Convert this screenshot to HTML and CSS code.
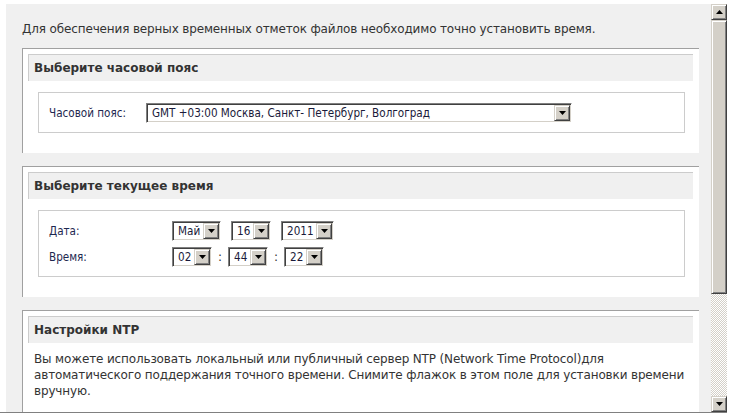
FILE: index.html
```html
<!DOCTYPE html>
<html lang="ru">
<head>
<meta charset="utf-8">
<title>Время</title>
<link rel="stylesheet" href="styles.css">
</head>
<body>
<div class="window">
  <div class="viewport">
    <p class="intro">Для обеспечения верных временных отметок файлов необходимо точно установить время.</p>

    <div class="panel">
      <div class="panel-head">Выберите часовой пояс</div>
      <div class="box">
        <div class="row">
          <span class="label label-tz">Часовой пояс:</span>
          <span class="combo combo-tz"><span class="combo-text">GMT +03:00 Москва, Санкт- Петербург, Волгоград</span><span class="combo-btn"><svg width="7" height="4" viewBox="0 0 7 4"><path d="M0 0H7L3.5 4Z" fill="#000"/></svg></span></span>
        </div>
      </div>
    </div>

    <div class="panel">
      <div class="panel-head">Выберите текущее время</div>
      <div class="box box-time">
        <div class="row">
          <span class="label label-dt">Дата:</span>
          <span class="combo combo-month"><span class="combo-text">Май</span><span class="combo-btn"><svg width="7" height="4" viewBox="0 0 7 4"><path d="M0 0H7L3.5 4Z" fill="#000"/></svg></span></span>
          <span class="combo combo-sm gap10"><span class="combo-text">16</span><span class="combo-btn"><svg width="7" height="4" viewBox="0 0 7 4"><path d="M0 0H7L3.5 4Z" fill="#000"/></svg></span></span>
          <span class="combo combo-year gap10"><span class="combo-text">2011</span><span class="combo-btn"><svg width="7" height="4" viewBox="0 0 7 4"><path d="M0 0H7L3.5 4Z" fill="#000"/></svg></span></span>
        </div>
        <div class="row">
          <span class="label label-dt">Время:</span>
          <span class="combo combo-sm"><span class="combo-text">02</span><span class="combo-btn"><svg width="7" height="4" viewBox="0 0 7 4"><path d="M0 0H7L3.5 4Z" fill="#000"/></svg></span></span>
          <span class="colon">:</span>
          <span class="combo combo-sm"><span class="combo-text">44</span><span class="combo-btn"><svg width="7" height="4" viewBox="0 0 7 4"><path d="M0 0H7L3.5 4Z" fill="#000"/></svg></span></span>
          <span class="colon">:</span>
          <span class="combo combo-sm"><span class="combo-text">22</span><span class="combo-btn"><svg width="7" height="4" viewBox="0 0 7 4"><path d="M0 0H7L3.5 4Z" fill="#000"/></svg></span></span>
        </div>
      </div>
    </div>

    <div class="panel">
      <div class="panel-head">Настройки NTP</div>
      <p class="para">Вы можете использовать локальный или публичный сервер NTP (Network Time Protocol)для<br>автоматического поддержания точного времени. Снимите флажок в этом поле для установки времени<br>вручную.</p>
      <div class="box box-ntp"></div>
    </div>
  </div>

  <div class="scrollbar">
    <div class="sb-btn"><svg width="7" height="4" viewBox="0 0 7 4"><path d="M3.5 0L7 4H0Z" fill="#000"/></svg></div>
    <div class="sb-thumb"></div>
    <div class="sb-track"></div>
    <div class="sb-btn"><svg width="7" height="4" viewBox="0 0 7 4"><path d="M0 0H7L3.5 4Z" fill="#000"/></svg></div>
  </div>
</div>
</body>
</html>
```
FILE: styles.css
```css
html, body {
  margin: 0;
  padding: 0;
  background: #fff;
}

body {
  font-family: "DejaVu Sans", Verdana, sans-serif;
  font-size: 12px;
  color: #333;
}

.window {
  display: flex;
  margin-top: 4px;
  width: 727px;
  padding-left: 6px;
  box-sizing: border-box;
  border-bottom: 1px solid #808080;
  height: 409px;
}

.viewport {
  width: 705px;
  height: 408px;
  background: #f0f0f0;
  overflow: hidden;
}

.intro {
  margin: 0;
  padding: 17px 0 0 16px;
  line-height: 16px;
  letter-spacing: -0.14px;
  white-space: nowrap;
}

.panel {
  margin: 11px 12px 13px 16px;
  background: #fff;
  border-top: 1px solid #a0a0a0;
  border-left: 1px solid #a0a0a0;
  padding: 5px 6px 20px 5px;
}

.panel + .panel {
  margin-top: 0;
}

.panel-head {
  height: 26px;
  line-height: 26px;
  background: #f0f0f0;
  border-top: 1px solid #cccccc;
  border-left: 1px solid #cccccc;
  padding-left: 5px;
  font-weight: bold;
  color: #333;
}

.box {
  margin: 11px 8px 0 10px;
  border: 1px solid #cccccc;
  padding: 10px 10px 9px 10px;
  display: flex;
  flex-direction: column;
  gap: 6px;
}

.box-ntp {
  margin-top: 13px;
  height: 30px;
}

.row {
  display: flex;
  align-items: center;
  height: 20px;
}

.label {
  font-family: "DejaVu Sans Condensed", Tahoma, sans-serif;
  font-size: 11.6px;
  color: #1e2850;
}

.label-tz {
  width: 97px;
}

.label-dt {
  width: 123px;
}

.combo {
  display: flex;
  align-items: stretch;
  box-sizing: border-box;
  height: 20px;
  background: #fff;
  border: 1px solid;
  border-color: #808080 #ffffff #ffffff #808080;
  box-shadow: inset 1px 1px 0 #404040, inset -1px -1px 0 #d4d0c8;
  padding: 1px;
  font-family: "DejaVu Sans Condensed", Tahoma, sans-serif;
  font-size: 11.6px;
  color: #1a1a3a;
}

.combo-text {
  flex: 1;
  padding-left: 4px;
  line-height: 16px;
  white-space: nowrap;
  overflow: hidden;
}

.combo-btn {
  width: 16px;
  box-sizing: border-box;
  background: #d4d0c8;
  border: 1px solid;
  border-color: #d4d0c8 #404040 #404040 #d4d0c8;
  box-shadow: inset 1px 1px 0 #fff, inset -1px -1px 0 #808080;
  display: flex;
  align-items: center;
  justify-content: center;
}

.combo-tz { width: 426px; }
.combo-month { width: 49px; }
.combo-sm { width: 40px; }
.combo-year { width: 53px; }

.gap10 { margin-left: 10px; }

.colon {
  width: 16px;
  text-align: center;
  font-size: 12px;
  color: #333;
}

.para {
  margin: 8px 0 0 6px;
  line-height: 16px;
  color: #333;
  letter-spacing: -0.14px;
  white-space: nowrap;
}

.scrollbar {
  width: 16px;
  height: 408px;
  display: flex;
  flex-direction: column;
  background: #d4d0c8;
}

.sb-btn {
  height: 16px;
  box-sizing: border-box;
  background: #d4d0c8;
  border: 1px solid;
  border-color: #d4d0c8 #404040 #404040 #d4d0c8;
  box-shadow: inset 1px 1px 0 #fff, inset -1px -1px 0 #808080;
  display: flex;
  align-items: center;
  justify-content: center;
}

.sb-thumb {
  height: 274px;
  box-sizing: border-box;
  background: #d4d0c8;
  border: 1px solid;
  border-color: #d4d0c8 #404040 #404040 #d4d0c8;
  box-shadow: inset 1px 1px 0 #fff, inset -1px -1px 0 #808080;
}

.sb-track {
  flex: 1;
  background: repeating-conic-gradient(#ffffff 0 25%, #d4d0c8 0 50%) 0 0 / 2px 2px;
}
```
